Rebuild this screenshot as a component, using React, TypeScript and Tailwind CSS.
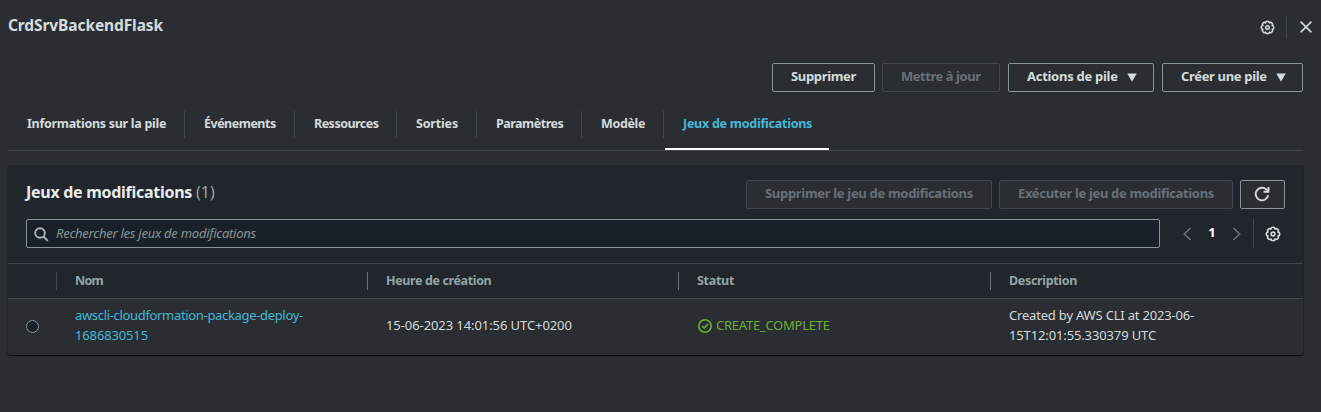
import type { ReactNode } from 'react';

function Gear({ className }: { className: string }) {
  return (
    <svg viewBox="0 0 16 16" className={className} fill="none" stroke="currentColor" strokeWidth="1.7" strokeLinejoin="round">
      <path d="M12.99 5.93A2.1 2.1 0 0 1 12.99 10.07A2.1 2.1 0 0 1 10.07 12.99A2.1 2.1 0 0 1 5.93 12.99A2.1 2.1 0 0 1 3.01 10.07A2.1 2.1 0 0 1 3.01 5.93A2.1 2.1 0 0 1 5.93 3.01A2.1 2.1 0 0 1 10.07 3.01A2.1 2.1 0 0 1 12.99 5.93Z" />
      <circle cx="8" cy="8" r="1.9" strokeWidth="1.6" />
    </svg>
  );
}

function Button({ children, className, disabled = false }: { children: ReactNode; className: string; disabled?: boolean }) {
  return (
    <button
      disabled={disabled}
      className={`flex h-[29px] items-center rounded-[2px] border bg-[#2a2e33] pb-[2px] pl-[18px] text-[13px] font-bold whitespace-nowrap ${
        disabled ? 'border-[#414750] text-[#687078]' : 'border-[#879596] text-[#d5dbdb]'
      } ${className}`}
    >
      {children}
    </button>
  );
}

function Caret() {
  return (
    <svg viewBox="0 0 10 9" className="mt-[2px] ml-[9px] h-[9px] w-[10px]" fill="currentColor">
      <path d="M.3.5h9.4L5 8.7Z" />
    </svg>
  );
}

const tabs = [
  { label: 'Informations sur la pile', width: 'w-[177px]', text: 'tracking-[-0.29px]' },
  { label: 'Événements', width: 'w-[110px]', text: 'tracking-[-0.5px]' },
  { label: 'Ressources', width: 'w-[102px]', text: 'tracking-[-0.52px]' },
  { label: 'Sorties', width: 'w-[80px]', text: 'tracking-[-0.17px]' },
  { label: 'Paramètres', width: 'w-[105px]', text: 'tracking-[-0.5px]' },
  { label: 'Modèle', width: 'w-[82px]', text: 'tracking-[-0.36px]' },
];

const columns = [
  { label: 'Nom', text: 'tracking-[-0.7px]' },
  { label: 'Heure de création', text: 'tracking-[-0.37px]' },
  { label: 'Statut', text: 'tracking-[-0.29px]' },
  { label: 'Description', text: 'tracking-[-0.33px]' },
];

const grid = 'grid grid-cols-[48px_311px_311px_312px_1fr]';

export default function App() {
  return (
    <main className="h-[412px] w-[1321px] overflow-hidden bg-[#2a2e33] pl-2 font-['Noto_Sans',sans-serif] text-[13px] text-[#d5dbdb]">
      <header className="flex h-[63px] items-start justify-between pr-[9px]">
        <h1 className="pt-[15px] text-[15.5px] leading-[20px] font-bold tracking-[-0.1px]">CrdSrvBackendFlask</h1>
        <div className="flex items-center pt-4">
          <Gear className="size-[15px]" />
          <div className="ml-[11px] h-[22px] w-px bg-[#414750]" />
          <svg viewBox="0 0 12 12" className="ml-[13px] size-3" fill="none" stroke="currentColor" strokeWidth="1.5">
            <path d="M.6.6l10.8 10.8M11.4.6L.6 11.4" />
          </svg>
        </div>
      </header>

      <div className="w-[1295px]">
        <div className="flex justify-end">
          <Button className="w-[103px] tracking-[-0.33px]">Supprimer</Button>
          <Button disabled className="ml-[7px] w-[118px] tracking-[-0.45px]">Mettre à jour</Button>
          <Button className="ml-2 w-[146px] tracking-[-0.28px]">Actions de pile<Caret /></Button>
          <Button className="ml-2 w-[141px] tracking-[-0.34px]">Créer une pile<Caret /></Button>
        </div>

        <nav className="flex h-[59px] items-end border-b border-[#414750] text-[12.5px] font-bold">
          {tabs.map((tab) => (
            <div key={tab.label} className={`mb-3 flex h-[27px] items-center border-r border-[#414750] pl-[19px] whitespace-nowrap ${tab.width} ${tab.text}`}>
              {tab.label}
            </div>
          ))}
          <div className="ml-px flex h-[39px] w-[164px] items-start border-b-2 border-white pt-[3px] pl-[18px] leading-[19px] tracking-[-0.25px] whitespace-nowrap text-[#44b9d6]">
            Jeux de modifications
          </div>
        </nav>

        <section className="mt-[14px] rounded-[2px] shadow-[0_1px_1px_0_rgba(0,0,0,0.6),1px_1px_1px_0_rgba(0,0,0,0.2),-1px_1px_1px_0_rgba(0,0,0,0.15)]">
          <div className="h-[98px] bg-[#21252c] px-[18px] pt-[15px]">
            <div className="flex">
              <h2 className="mr-auto text-[16px] leading-[25px] font-bold tracking-[-0.28px] text-[#eaeded]">
                Jeux de modifications <span className="font-normal tracking-normal text-[#95a5a6]">(1)</span>
              </h2>
              <Button disabled className="w-[246px] tracking-[-0.31px]">Supprimer le jeu de modifications</Button>
              <Button disabled className="ml-[7px] w-[234px] tracking-[-0.34px]">Exécuter le jeu de modifications</Button>
              <button className="ml-[7px] flex h-[29px] w-[45px] items-center justify-center rounded-[2px] border border-[#879596] bg-[#2a2e33] pr-px pb-px">
                <svg viewBox="0 0 16 16" className="size-4" fill="none" stroke="currentColor" strokeWidth="1.9">
                  <path d="M14.2 9.2A6.3 6.3 0 1 1 12.3 3.4L14.4 5.5" />
                  <path d="M14.5 1V5.8H9.5" />
                </svg>
              </button>
            </div>
            <div className="mt-[10px] flex items-center">
              <div className="flex h-[29px] w-[1134px] items-center rounded-[2px] border border-[#879596] bg-[#1a2029] pl-[7px]">
                <svg viewBox="0 0 15 15" className="mt-px size-[15px] text-[#aab7b8]" fill="none" stroke="currentColor" strokeWidth="1.9">
                  <circle cx="6" cy="6" r="4.8" />
                  <path d="M9.5 9.5l4.3 4.3" />
                </svg>
                <span className="ml-[7px] text-[13px] tracking-[-0.25px] text-[#879596] italic">Rechercher les jeux de modifications</span>
              </div>
              <svg viewBox="0 0 9 14" className="ml-[23px] h-[14px] w-[9px] text-[#687078]" fill="none" stroke="currentColor" strokeWidth="1.6">
                <path d="M7.7 1L1.3 7l6.4 6" />
              </svg>
              <span className="w-[40px] pb-px text-center font-bold text-white">1</span>
              <svg viewBox="0 0 9 14" className="h-[14px] w-[9px] text-[#687078]" fill="none" stroke="currentColor" strokeWidth="1.6">
                <path d="M1.3 1l6.4 6-6.4 6" />
              </svg>
              <div className="ml-3 h-[29px] w-px bg-[#414750]" />
              <Gear className="ml-[11px] size-4" />
            </div>
          </div>

          <div className={`h-[36px] border-y border-[#414750] bg-[#21252c] pt-2 text-[12.5px] font-bold text-[#95a5a6] ${grid}`}>
            <span />
            {columns.map((column, i) => (
              <div key={column.label} className={`flex h-[18px] items-center border-l pt-px pl-[18px] ${i === 0 ? 'border-[#414750]' : 'border-[#687078]'} ${column.text}`}>
                {column.label}
              </div>
            ))}
          </div>

          <div className={`h-[56px] items-center pb-[5px] leading-[20px] whitespace-nowrap ${grid}`}>
            <span className="mt-[4px] ml-[18px] size-[13px] rounded-full border border-[#879596] bg-[#1a2029]" />
            <div className="flex flex-col pl-[19px] text-[#44b9d6]">
              <span className="tracking-[-0.33px]">awscli-cloudformation-package-deploy-</span>
              <span className="tracking-[-0.14px]">1686830515</span>
            </div>
            <div className="pl-[19px] tracking-[-0.08px]">15-06-2023 14:01:56 UTC+0200</div>
            <div className="flex items-center pl-[20px] tracking-[-0.25px] text-[#6aaf35]">
              <svg viewBox="0 0 14 14" className="mt-[3px] mr-1 size-[14px]" fill="none" stroke="currentColor" strokeWidth="1.6">
                <circle cx="7" cy="7" r="6.2" />
                <path d="M4 7l2.2 2.1L10 5" />
              </svg>
              CREATE_COMPLETE
            </div>
            <div className="flex flex-col pl-[19px]">
              <span className="tracking-[-0.19px]">Created by AWS CLI at 2023-06-</span>
              <span className="tracking-[-0.13px]">15T12:01:55.330379 UTC</span>
            </div>
          </div>
        </section>
      </div>
    </main>
  );
}
